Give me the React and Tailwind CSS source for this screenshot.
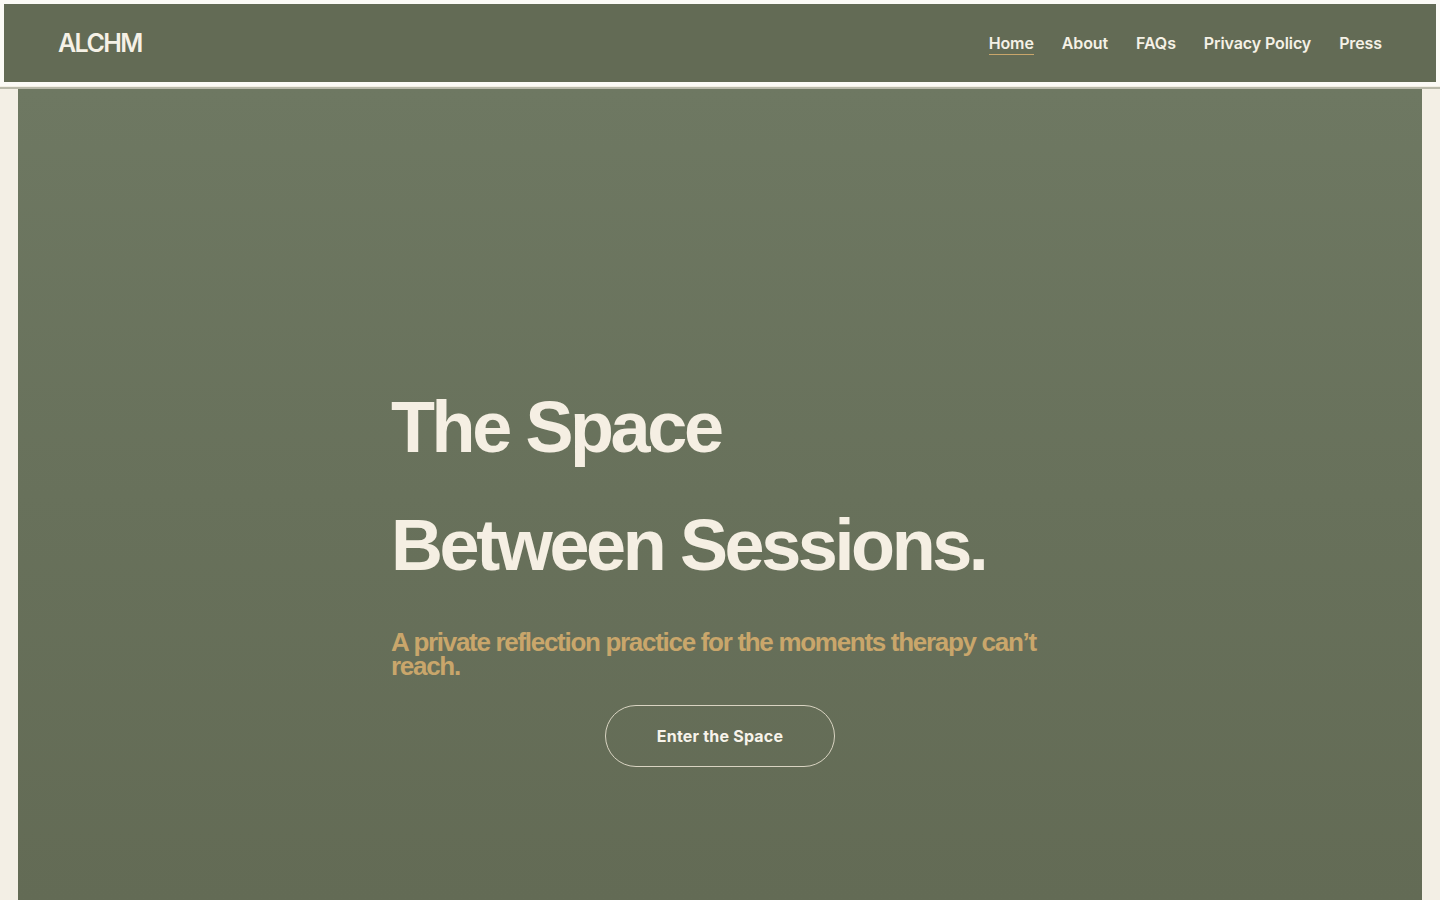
export default function App() {
  const nav = ["Home", "About", "FAQs", "Privacy Policy", "Press"];
  return (
    <div className="min-h-screen bg-[#f3efe5]" style={{ fontFamily: "Inter, 'Liberation Sans', sans-serif" }}>
      <div className="bg-[#fbfaf6] p-[4px] pb-[4px]">
        <header className="h-[78px] bg-[#636b55] flex items-center justify-between pl-[54px] pr-[54px]">
          <div className="text-[25px] font-semibold tracking-[-1.6px] text-[#f5f1e6] leading-none">ALCHM</div>
          <nav className="flex items-center gap-[28px] pt-[2px]">
            {nav.map((n, i) => (
              <a
                key={n}
                className={
                  "text-[16px] font-semibold text-[#f5f1e6] leading-[20px] tracking-[-0.1px] " +
                  (i === 0 ? "border-b border-[#c9a66b] pb-[1px]" : "pb-[2px]")
                }
              >
                {n}
              </a>
            ))}
          </nav>
        </header>
      </div>
      <div className="h-[1px] bg-[#f3efe5]"></div>
      <div className="h-[2px] bg-[#b9b9aa]"></div>
      <main className="mx-[18px] min-h-[811px] bg-gradient-to-b from-[#6e7862] via-[#68715b] to-[#636b55] pt-[279px] pb-[40px]">
        <div className="w-[658px] mx-auto flex flex-col" style={{ fontFamily: "'Liberation Sans', Arial, sans-serif" }}>
          <h1 className="text-[72px] font-bold leading-[118px] tracking-[-3.4px] text-[#f5efe3]">
            The Space
            <br />
            Between Sessions.
          </h1>
          <p className="mt-[26px] text-[26px] font-bold leading-[24px] tracking-[-1.3px] text-[#c9a66b]">
            A private reflection practice for the moments therapy can’t reach.
          </p>
          <div className="mt-[27px] flex justify-center">
            <button
              className="w-[230px] h-[62px] rounded-full border border-[#d9d4c2] text-[16px] font-bold text-[#f7f3ea] tracking-[0.2px]"
              style={{ fontFamily: "Inter, 'Open Sans', sans-serif" }}
            >
              Enter the Space
            </button>
          </div>
        </div>
      </main>
    </div>
  );
}
